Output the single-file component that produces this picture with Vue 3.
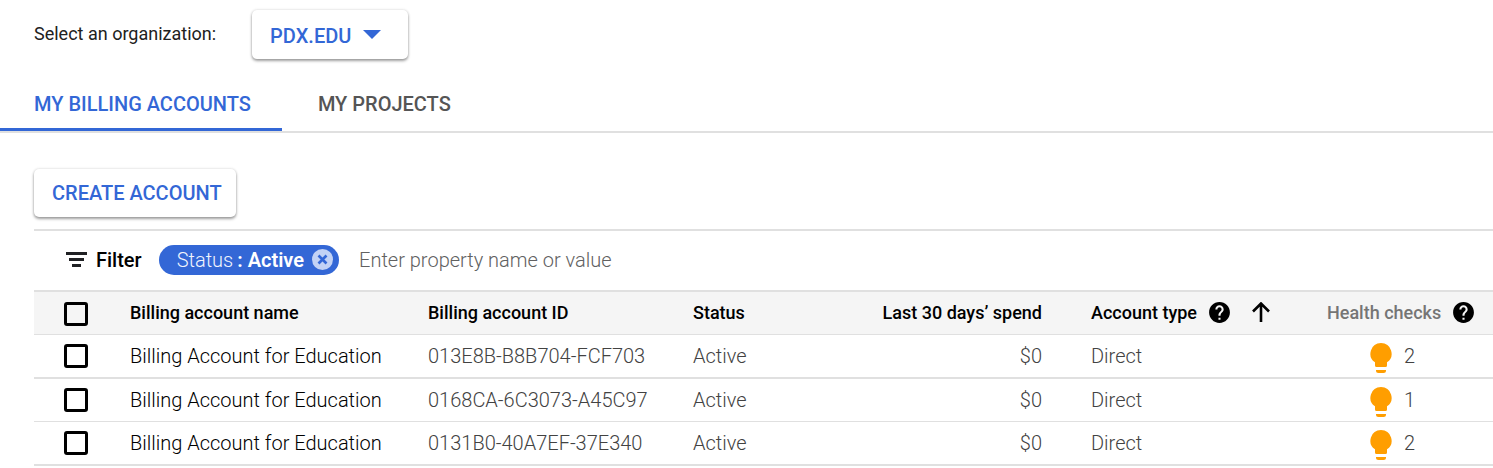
<script setup>
import { ref } from 'vue'

const organization = ref('PDX.EDU')
const query = ref('')
const accounts = [
  { name: 'Billing Account for Education', id: '013E8B-B8B704-FCF703', status: 'Active', spend: '$0', type: 'Direct', checks: 2 },
  { name: 'Billing Account for Education', id: '0168CA-6C3073-A45C97', status: 'Active', spend: '$0', type: 'Direct', checks: 1 },
  { name: 'Billing Account for Education', id: '0131B0-40A7EF-37E340', status: 'Active', spend: '$0', type: 'Direct', checks: 2 },
]
const helpPath = 'M12 2C6.48 2 2 6.48 2 12s4.48 10 10 10 10-4.48 10-10S17.52 2 12 2zm1 17h-2v-2h2v2zm2.07-7.75l-.9.92C13.45 12.9 13 13.5 13 15h-2v-.5c0-1.1.45-2.1 1.17-2.83l1.24-1.26c.37-.36.59-.86.59-1.41 0-1.1-.9-2-2-2s-2 .9-2 2H8c0-2.21 1.79-4 4-4s4 1.79 4 4c0 .88-.36 1.68-.93 2.25z'
</script>

<template>
  <main class="page">
    <div class="org">
      <label for="organization">Select an organization:</label>
      <div class="org-picker">
        <select id="organization" v-model="organization" class="raised">
          <option>PDX.EDU</option>
        </select>
        <svg class="caret" width="18" height="9" viewBox="0 0 18 9" aria-hidden="true"><path d="M0 0h18L9 9z" fill="currentColor" /></svg>
      </div>
    </div>

    <nav class="tabs">
      <a href="#accounts" class="tab active" aria-current="page">MY BILLING ACCOUNTS</a>
      <a href="#projects" class="tab">MY PROJECTS</a>
    </nav>

    <section class="content">
      <button type="button" class="raised create">CREATE ACCOUNT</button>

      <div class="filter">
        <svg width="21" height="15" viewBox="0 0 21 15" aria-hidden="true"><path d="M0 0h21v3H0zM3 6h15v3H3zM6 12h9v3H6z" fill="#202124" /></svg>
        <label for="filter" class="filter-label">Filter</label>
        <span class="chip">
          <span class="chip-key">Status</span><b>:&nbsp;Active</b>
          <button type="button" class="chip-remove" aria-label="Remove filter">
            <svg width="21" height="21" viewBox="0 0 21 21" aria-hidden="true">
              <circle cx="10.5" cy="10.5" r="10.5" fill="#c2d2f5" />
              <path d="M6.500 6.500l8 8M14.500 6.500l-8 8" stroke="#3367d6" stroke-width="2.600" />
            </svg>
          </button>
        </span>
        <input id="filter" v-model="query" type="text" placeholder="Enter property name or value">
      </div>

      <table>
        <colgroup>
          <col class="c-check"><col class="c-name"><col class="c-id"><col class="c-status"><col class="c-type"><col class="c-health">
        </colgroup>
        <thead>
          <tr>
            <th class="select-all"><input type="checkbox" aria-label="Select all accounts"></th>
            <th>Billing account name</th>
            <th>Billing account ID</th>
            <th>
              <div class="pair"><span>Status</span><span>Last 30 days’ spend</span></div>
            </th>
            <th class="type">
              <div class="head">
                <span>Account type</span>
                <svg class="help" width="25" height="25" viewBox="0 0 24 24" aria-hidden="true"><path :d="helpPath" /></svg>
                <svg class="sort" width="18" height="20" viewBox="0 0 18 20" aria-hidden="true"><path d="M9 20V2M1 9.500l8-8 8 8" fill="none" stroke="#000" stroke-width="2.600" /></svg>
              </div>
            </th>
            <th class="muted">
              <div class="head">
                <span>Health checks</span>
                <svg class="help" width="25" height="25" viewBox="0 0 24 24" aria-hidden="true"><path :d="helpPath" /></svg>
              </div>
            </th>
          </tr>
        </thead>
        <tbody>
          <tr v-for="account in accounts" :key="account.id">
            <td><input type="checkbox" :aria-label="'Select ' + account.id"></td>
            <td class="name">{{ account.name }}</td>
            <td>{{ account.id }}</td>
            <td>
              <div class="pair"><span>{{ account.status }}</span><span>{{ account.spend }}</span></div>
            </td>
            <td class="type">{{ account.type }}</td>
            <td>
              <div class="health">
                <svg width="22" height="34" viewBox="0 -4 22 34" aria-hidden="true"><path d="M11 0a10.600 10.600 0 0 1 6 19.300V22.500q0 1.500-1.500 1.500h-9Q5 24 5 22.500V19.300A10.600 10.600 0 0 1 11 0zM6 27h10v.5q0 2.500-2.500 2.500h-5Q6 30 6 27.500z" fill="#ff9e00" /></svg>
                <span>{{ account.checks }}</span>
              </div>
            </td>
          </tr>
        </tbody>
      </table>
    </section>
  </main>
</template>

<style>
body {
  background: #fff;
}
</style>

<style scoped>
.page {
  font-family: Roboto, "Liberation Sans", sans-serif;
  font-size: 20px;
  color: #424242;
  padding-top: 10px;
}

.org {
  display: flex;
  align-items: center;
  gap: 36px;
  padding-left: 34px;
  font-size: 18px;
  color: #212121;
}

.org label {
  padding-bottom: 2px;
}

.org-picker {
  position: relative;
}

.raised {
  box-sizing: border-box;
  height: 49px;
  padding: 0 14px 0 18px;
  border: 0;
  border-radius: 5px;
  background: #fff;
  box-shadow: 0 2px 3px rgba(0, 0, 0, 0.36), 0 0 3px rgba(0, 0, 0, 0.16);
  color: #3367d6;
  font: 500 20px Roboto, "Liberation Sans", sans-serif;
}

select.raised {
  display: block;
  width: 156px;
  padding-top: 2px;
  appearance: none;
}

.caret {
  position: absolute;
  top: 20px;
  right: 27px;
  color: #3367d6;
  pointer-events: none;
}

.tabs {
  display: flex;
  margin-top: 19px;
  border-bottom: 2px solid #e0e0e0;
}

.tab {
  box-sizing: border-box;
  height: 53px;
  padding: 0 36px;
  border-bottom: 3px solid transparent;
  color: #555;
  font-weight: 500;
  line-height: 52px;
  text-decoration: none;
}

.tab.active {
  padding: 0 31px 0 34px;
  border-color: #3367d6;
  color: #3367d6;
}

.content {
  padding: 36px 0 0 34px;
}

.create {
  display: block;
  height: 48px;
}

.filter {
  display: flex;
  align-items: center;
  margin-top: 12px;
  height: 57px;
  padding: 0 0 2px 32px;
  border-top: 2px solid #e0e0e0;
}

.filter-label {
  margin: 0 17px 0 9px;
  color: #000;
  font-weight: 500;
}

.chip {
  box-sizing: border-box;
  display: flex;
  align-items: center;
  height: 30px;
  padding: 0 6px 0 18px;
  border-radius: 15px;
  background: #3367d6;
  color: #fff;
}

.chip b {
  margin: 0 8px 0 4px;
  font-weight: 600;
}

.chip-key {
  color: #f0f4fd;
  font-weight: 300;
}

.chip-remove {
  display: flex;
  padding: 0;
  border: 0;
  background: none;
}

#filter {
  flex: 1;
  min-width: 0;
  margin-left: 20px;
  padding: 0;
  border: 0;
  outline: 0;
  font: 300 20px Roboto, "Liberation Sans", sans-serif;
}

#filter::placeholder {
  color: #616161;
}

table {
  width: 100%;
  table-layout: fixed;
  border-collapse: separate;
  border-spacing: 0;
  border-top: 2px solid #e0e0e0;
}

.c-check { width: 96px; }
.c-name { width: 298px; }
.c-id { width: 265px; }
.c-status { width: 349px; }
.c-type { width: 285px; }
.c-health { width: 166px; }

th,
td {
  height: 42px;
  padding: 0;
  border-bottom: 1px solid #e0e0e0;
  font-weight: 300;
  text-align: left;
  white-space: nowrap;
}

tbody tr:nth-child(odd) td {
  border-bottom-width: 2px;
}

th {
  height: 40px;
  padding-bottom: 2px;
  background: #f5f5f5;
  color: #000;
  font-size: 18px;
  font-weight: 500;
}

.select-all {
  height: 41px;
  padding: 1px 0 0;
}

.muted {
  color: #757575;
}

.name {
  color: #000;
}

.type {
  padding-left: 49px;
}

.pair {
  display: flex;
  justify-content: space-between;
}

.head {
  display: flex;
  align-items: center;
}

.help {
  margin-left: 10px;
  fill: #000;
}

.sort {
  margin-left: 20px;
}

.health {
  display: flex;
  align-items: center;
  gap: 12px;
  padding-left: 43px;
}

input[type="checkbox"] {
  display: block;
  box-sizing: border-box;
  width: 24px;
  height: 24px;
  margin: 0 0 0 30px;
  border: 3px solid #000;
  border-radius: 3px;
  appearance: none;
}
</style>
